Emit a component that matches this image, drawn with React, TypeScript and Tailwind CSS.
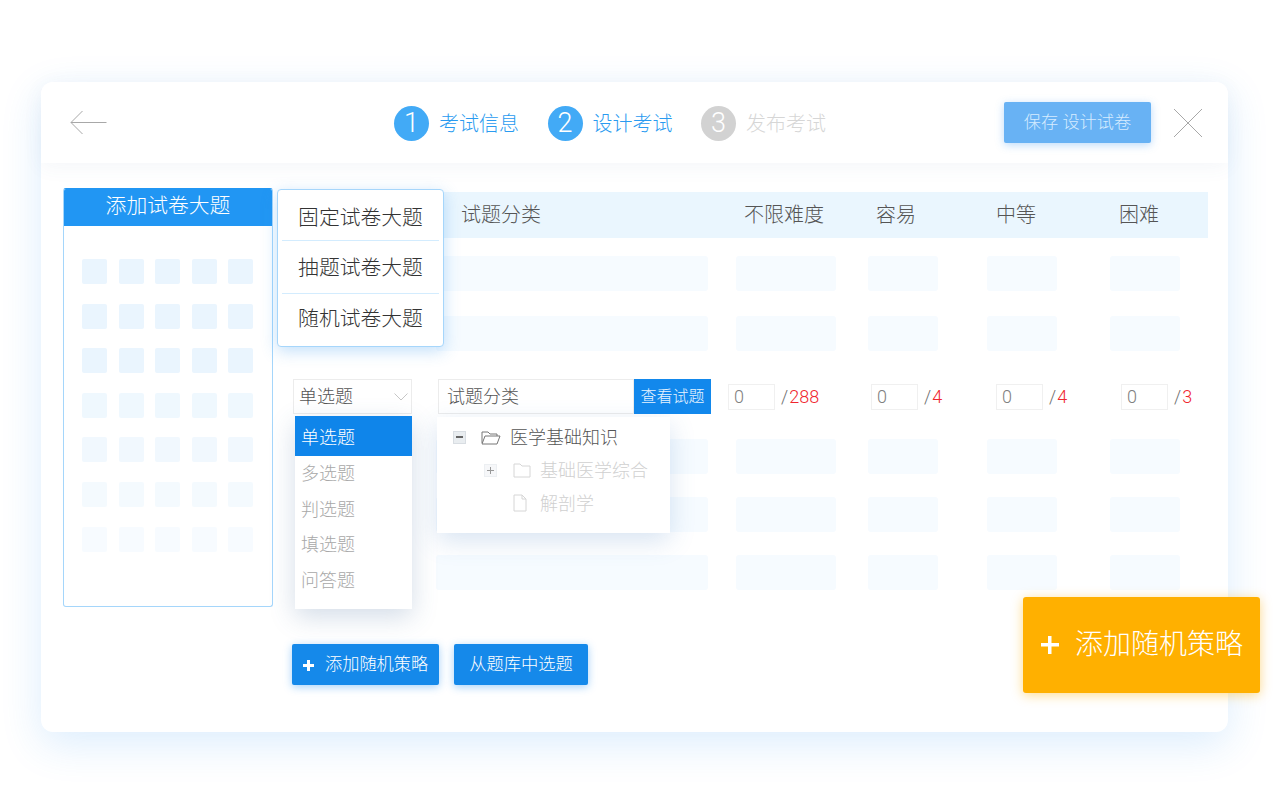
const grid = [1, 1, 1, 0.75, 0.65, 0.5, 0.4];

function Step({ n, label, off }: { n: number; label: string; off?: boolean }) {
  return (
    <div className="flex items-center gap-[10px]">
      <div className={`flex h-[35px] w-[35px] items-center justify-center rounded-full text-[27px] font-light text-white ${off ? "bg-[#d2d2d2]" : "bg-[#42aaf6]"}`}>{n}</div>
      <span className={`text-[20px] leading-none font-light ${off ? "text-[#d6d6d6]" : "text-[#2a9bf0]"}`}>{label}</span>
    </div>
  );
}

function SkeletonRow({ className }: { className: string }) {
  const cell = "h-[35px] rounded-[3px] bg-[#f6fbff]";
  return (
    <div className={`flex ${className}`}>
      <div className={`${cell} ml-[151px] w-[272px]`} />
      <div className={`${cell} ml-[28px] w-[100px]`} />
      <div className={`${cell} ml-[32px] w-[70px]`} />
      <div className={`${cell} ml-[49px] w-[70px]`} />
      <div className={`${cell} ml-[53px] w-[70px]`} />
    </div>
  );
}

function Score({ total, className }: { total: string; className: string }) {
  return (
    <div className={`flex items-center ${className}`}>
      <div className="flex h-[26px] w-[47px] items-center border border-[#f0f0f0] pl-[5px] text-[18px] font-light text-[#808080]">0</div>
      <span className="ml-[6px] text-[18px] font-light text-[#707070]">/</span>
      <span className="ml-px text-[18px] font-light text-[#f0262e]">{total}</span>
    </div>
  );
}

export default function App() {
  return (
    <div className="relative h-[790px] w-[1280px] overflow-hidden bg-white pl-[41px] pt-[82px] font-['Roboto','Noto_Sans_CJK_SC',sans-serif]">
      <div className="relative h-[650px] w-[1187px] rounded-[12px] bg-white shadow-[0_12px_40px_rgba(40,140,240,0.16)]">
        <header className="relative z-10 flex h-[81px] items-center rounded-t-[12px] bg-white shadow-[0_4px_20px_rgba(60,110,160,0.06)]">
          <svg width="37" height="25" viewBox="0 0 37 25" fill="none" stroke="#a8a8a8" className="ml-[29px]">
            <path d="M36.500 12.500H1M12.500 1 1 12.500 12.500 24" />
          </svg>
          <div className="ml-[287px] mt-[2px] flex gap-[28.5px]">
            <Step n={1} label="考试信息" />
            <Step n={2} label="设计考试" />
            <Step n={3} label="发布考试" off />
          </div>
          <button className="ml-[178px] flex h-[41px] w-[147px] items-center justify-center rounded-[2px] bg-[#68b2f4] text-[17.2px] font-light whitespace-pre text-[#d6ecff] shadow-[0_2px_8px_rgba(60,150,240,0.35)]">保存 设计试卷</button>
          <svg width="30" height="30" viewBox="0 0 30 30" fill="none" stroke="#a8a8a8" className="ml-[22px]">
            <path d="M1 1l28 28M29 1 1 29" />
          </svg>
        </header>

        <div className="flex">
          <aside className="ml-[22px] mt-[25px] h-[419px] w-[210px] overflow-hidden rounded-[3px] border border-[#a5d6fb] border-t-[#2196f3]">
            <div className="-mx-px -mt-px flex h-[38px] items-center justify-center bg-[#2196f3] text-[20.8px] font-light text-white">添加试卷大题</div>
            <div className="ml-[18px] mt-[33px] grid grid-cols-[repeat(5,25px)] gap-x-[11.6px] gap-y-[19.6px]">
              {grid.flatMap((o, r) =>
                [0, 1, 2, 3, 4].map((c) => (
                  <div key={`${r}-${c}`} className="h-[25px] rounded-[2px] bg-[#eaf5fe]" style={{ opacity: o }} />
                ))
              )}
            </div>
          </aside>

          <main className="relative ml-[12px] mt-[29px] w-[923px]">
            <div className="flex h-[46px] items-center bg-[#eaf6fe] text-[20px] font-light text-[#555]">
              <span className="ml-[176px] w-[283px]">试题分类</span>
              <span className="w-[132px]">不限难度</span>
              <span className="w-[120px]">容易</span>
              <span className="w-[123px]">中等</span>
              <span>困难</span>
            </div>
            <SkeletonRow className="mt-[18px]" />
            <SkeletonRow className="mt-[25px]" />

            <div className="mt-[28px] flex h-[35px] items-center">
              <div className="ml-[8px] flex h-[35px] w-[119px] items-center justify-between border border-[#ececec] pl-[5px] pr-[3px] text-[18px] font-light text-[#555]">
                单选题
                <svg width="14" height="8" viewBox="0 0 14 8" fill="none" stroke="#c6c6c6"><path d="M.5.5l6.500 6.500 6.500-6.500" /></svg>
              </div>
              <div className="ml-[26px] flex h-[35px] w-[273px] items-stretch">
                <div className="flex flex-1 items-center border border-[#ececec] pl-[8px] text-[18px] font-light text-[#555]">试题分类</div>
                <div className="flex w-[77px] items-center justify-center bg-[#1288ec] text-[16px] font-light text-[#e8f4ff]">查看试题</div>
              </div>
              <Score total="288" className="ml-[17px] w-[143px]" />
              <Score total="4" className="w-[125px]" />
              <Score total="4" className="w-[125px]" />
              <Score total="3" />
            </div>

            <SkeletonRow className="mt-[25px]" />
            <SkeletonRow className="mt-[23px]" />
            <SkeletonRow className="mt-[23px]" />

            <div className="ml-[7px] mt-[54px] flex gap-[15px]">
              <button className="flex h-[41px] w-[147px] items-center rounded-[2px] bg-[#1589ea] pl-[10px] pt-[1px] text-[17.2px] font-light text-white shadow-[0_2px_8px_rgba(30,140,240,0.4)]">
                <svg width="13" height="13" viewBox="0 0 13 13" className="mr-[10px]" fill="white"><path d="M5 1h3v4h4v3H8v4H5V8H1V5h4z" /></svg>
                添加随机策略
              </button>
              <button className="flex h-[41px] w-[134px] items-center justify-center rounded-[2px] bg-[#1589ea] pt-[1px] text-[17.3px] font-light text-white shadow-[0_2px_8px_rgba(30,140,240,0.4)]">从题库中选题</button>
            </div>

            {/* 题型下拉 */}
            <div className="absolute left-[10px] top-[224px] w-[117px] bg-white pb-[11px] text-[18px] font-light text-[#a8a8a8] shadow-[0_8px_24px_rgba(60,100,150,0.22)]">
              <div className="flex h-[40px] items-center bg-[#0f85ea] pl-[6px] pt-[3px] text-white">单选题</div>
              {["多选题", "判选题", "填选题", "问答题"].map((t) => (
                <div key={t} className="flex h-[35.5px] items-center pl-[6px]">{t}</div>
              ))}
            </div>

            {/* 分类树 */}
            <div className="absolute left-[152px] top-[225px] h-[116px] w-[233px] bg-white text-[18px] font-light shadow-[0_8px_24px_rgba(60,120,190,0.2)]">
              <div className="ml-[16px] mt-[8px] flex h-[24px] items-center text-[#555]">
                <span className="flex h-[13px] w-[13px] items-center justify-center border border-[#d8dde2] bg-[#e9edf0]"><span className="h-[1.5px] w-[7px] bg-[#666]" /></span>
                <svg width="20" height="15" viewBox="0 0 20 15" fill="none" stroke="#777" className="ml-[15px]"><path d="M1 13V2h6l2 2h7v2M1 14l3-8h15l-3 8z" /></svg>
                <span className="ml-[9px]">医学基础知识</span>
              </div>
              <div className="ml-[47px] mt-[9px] flex h-[24px] items-center text-[#d0d0d0]">
                <span className="flex h-[13px] w-[13px] items-center justify-center border border-[#eceff2] bg-[#f6f7f9]">
                  <svg width="9" height="9" viewBox="0 0 9 9" stroke="#999"><path d="M4.500 1v7M1 4.500h7" /></svg>
                </span>
                <svg width="18" height="15" viewBox="0 0 18 15" fill="none" stroke="#d6d6d6" className="ml-[16px]"><path d="M1 14V1h6l2 2h8v11z" /></svg>
                <span className="ml-[9px]">基础医学综合</span>
              </div>
              <div className="ml-[76px] mt-[9px] flex h-[24px] items-center text-[#d0d0d0]">
                <svg width="14" height="18" viewBox="0 0 14 18" fill="none" stroke="#d6d6d6"><path d="M1 1h8l4 4v12H1zM9 1v4h4" /></svg>
                <span className="ml-[13px]">解剖学</span>
              </div>
            </div>
          </main>
        </div>

        {/* 试卷大题菜单 */}
        <div className="absolute left-[236px] top-[107px] z-20 w-[167px] rounded-[4px] border border-[#a6d6fb] bg-white text-[20.8px] font-light text-[#333] shadow-[0_4px_16px_rgba(50,150,240,0.3)]">
          <div className="mx-[4px] flex h-[51px] items-center justify-center border-b border-[#d3ecfe] pt-[7px]">固定试卷大题</div>
          <div className="mx-[4px] flex h-[53px] items-center justify-center border-b border-[#d3ecfe] pt-[4px]">抽题试卷大题</div>
          <div className="mx-[4px] flex h-[52px] items-center justify-center">随机试卷大题</div>
        </div>

        <button className="absolute left-[982px] top-[515px] z-20 flex h-[96px] w-[237px] items-center rounded-[3px] bg-[#ffb000] pl-[17px] text-[28px] font-light text-white shadow-[0_2px_12px_rgba(255,176,0,0.45)]">
          <svg width="20" height="20" viewBox="0 0 20 20" className="mr-[15px]" fill="white"><path d="M8 1h3.500v7H19v3.500h-7.500V19H8v-7.500H1V8h7z" /></svg>
          添加随机策略
        </button>
      </div>
    </div>
  );
}
